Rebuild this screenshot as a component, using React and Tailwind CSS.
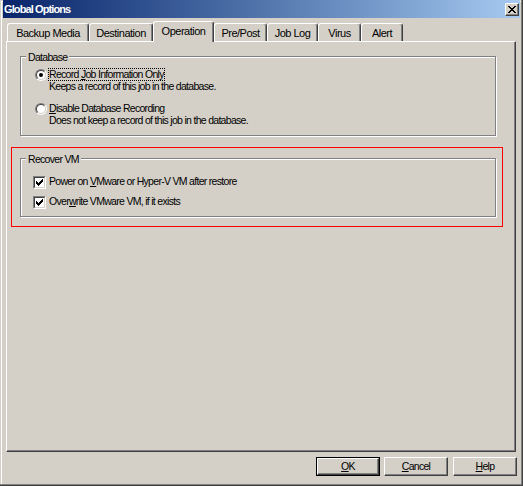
import React from 'react'

const TABS = [
  { label: 'Backup Media', w: 'w-[82px]' },
  { label: 'Destination', w: 'w-[64px]' },
  { label: 'Operation', w: 'w-[61px]', active: true },
  { label: 'Pre/Post', w: 'w-[53px]' },
  { label: 'Job Log', w: 'w-[51px]' },
  { label: 'Virus', w: 'w-[43px]' },
  { label: 'Alert', w: 'w-[42px]' },
]

const raised =
  'border border-t-white border-l-white border-r-[#404040] border-b-[#404040] shadow-[inset_-1px_-1px_0_#808080]'

function Radio({ checked }) {
  return (
    <span className="mt-[1px] flex h-[12px] w-[12px] shrink-0 rounded-full border border-t-[#808080] border-l-[#808080] border-r-white border-b-white">
      <span className="flex h-full w-full items-center justify-center rounded-full border border-t-[#404040] border-l-[#404040] border-r-[#d4d0c8] border-b-[#d4d0c8] bg-white">
        {checked && <span className="h-[4px] w-[4px] rounded-full bg-black" />}
      </span>
    </span>
  )
}

function Checkbox({ checked }) {
  return (
    <span className="mt-[1px] flex h-[13px] w-[13px] shrink-0 border border-t-[#808080] border-l-[#808080] border-r-white border-b-white">
      <span className="flex h-full w-full items-center justify-center border border-t-[#404040] border-l-[#404040] border-r-[#d4d0c8] border-b-[#d4d0c8] bg-white">
        {checked && (
          <svg width="7" height="7" viewBox="0 0 7 7" shapeRendering="crispEdges">
            <path
              fill="#000"
              d="M6 0h1v1h-1z M5 1h2v1h-2z M0 2h1v1h-1z M4 2h3v1h-3z M0 3h2v1h-2z M3 3h3v1h-3z M0 4h5v1h-5z M1 5h3v1h-3z M2 6h1v1h-1z"
            />
          </svg>
        )}
      </span>
    </span>
  )
}

// etched group box, legend sits over the top line
function GroupBox({ title, className, children }) {
  return (
    <div className={`relative border border-[#808080] shadow-[inset_1px_1px_0_#fff,1px_1px_0_#fff] ${className}`}>
      <span className="absolute left-[5px] top-[-6px] bg-[#d4d0c8] px-[2px] leading-[13px]">{title}</span>
      {children}
    </div>
  )
}

function RadioOption({ checked, focused, label, desc }) {
  return (
    <div className="flex items-start">
      <Radio checked={checked} />
      <div className="ml-[1px] flex flex-col items-start">
        <span className={`border leading-[11px] ${focused ? 'border-dotted border-black' : 'border-transparent'}`}>{label}</span>
        <span className="-mt-[1px] pl-[1px] leading-[13px]">{desc}</span>
      </div>
    </div>
  )
}

function CheckOption({ children }) {
  return (
    <div className="flex h-[13px] items-start">
      <Checkbox checked />
      <span className="ml-[3px] leading-[13px]">{children}</span>
    </div>
  )
}

function Button({ children, isDefault, className = '' }) {
  const inner = (
    <div className={`flex h-full w-full items-center justify-center bg-[#d4d0c8] leading-[13px] ${raised}`}>{children}</div>
  )
  if (isDefault)
    return <div className={`h-[19px] w-[64px] border border-black ${className}`}>{inner}</div>
  return <div className={`h-[19px] w-[64px] ${className}`}>{inner}</div>
}

export default function App() {
  return (
    <div className="relative flex h-[486px] w-[523px] flex-col bg-[#d4d0c8] font-['Liberation_Sans',Arial,sans-serif] text-[10.5px] tracking-[-0.7px] text-black shadow-[inset_-1px_-1px_0_#404040,inset_-2px_-2px_0_#808080,inset_1px_1px_0_#d4d0c8,inset_2px_2px_0_#fff]">
      {/* Title bar */}
      <div className="mx-[3px] flex h-[18px] items-center justify-between bg-linear-to-r from-[#0a246a] to-[#a6caf0] pl-[1px] pr-[1px]">
        <span className="text-[11px] font-bold leading-[13px] tracking-[-0.9px] text-white">Global Options</span>
        <div className={`flex h-[13px] w-[14px] items-center justify-center bg-[#d4d0c8] ${raised}`}>
          <svg width="8" height="7" viewBox="0 0 8 7" shapeRendering="crispEdges">
            <path
              fill="#000"
              d="M0 0h2v1h-2z M6 0h2v1h-2z M1 1h2v1h-2z M5 1h2v1h-2z M2 2h4v1h-4z M3 3h2v1h-2z M2 4h4v1h-4z M1 5h2v1h-2z M5 5h2v1h-2z M0 6h2v1h-2z M6 6h2v1h-2z"
            />
          </svg>
        </div>
      </div>

      {/* Tabs */}
      <div className="ml-[7px] mt-[3px] flex h-[20px] items-end text-[11px] tracking-[-0.5px]">
        {TABS.map(t => (
          <div
            key={t.label}
            className={`relative flex shrink-0 justify-center rounded-t-[3px] border-l border-r border-t border-l-white border-t-white border-r-[#404040] bg-[#d4d0c8] pt-[3px] leading-[13px] shadow-[inset_-1px_0_0_#808080] ${t.w} ${
              t.active ? 'z-10 -mb-[1px] h-[21px]' : 'h-[18px]'
            }`}
          >
            {t.label}
          </div>
        ))}
      </div>

      {/* Tab panel */}
      <div className="ml-[6px] flex h-[411px] w-[510px] flex-col border border-b-[#404040] border-l-white border-r-[#404040] border-t-white shadow-[inset_-1px_-1px_0_#808080]">
        <GroupBox title="Database" className="ml-[13px] mt-[14px] h-[80px] w-[476px]">
          <div className="flex flex-col pl-[14px] pt-[11px]">
            <RadioOption
              checked
              focused
              label={<>Record <u>J</u>ob Information Only</>}
              desc="Keeps a record of this job in the database."
            />
            <div className="mt-[9px]">
              <RadioOption
                label={<><u>D</u>isable Database Recording</>}
                desc="Does not keep a record of this job in the database."
              />
            </div>
          </div>
        </GroupBox>

        <div className="ml-[4px] mt-[11px] h-[80px] w-[492px] border border-[#ff0000]">
          <GroupBox title="Recover VM" className="ml-[8px] mt-[10px] h-[59px] w-[476px]">
            <div className="flex flex-col gap-[7px] pl-[12px] pt-[16px]">
              <CheckOption>
                Power on <u>V</u>Mware or Hyper-V VM after restore
              </CheckOption>
              <CheckOption>
                Over<u>w</u>rite VMware VM, if it exists
              </CheckOption>
            </div>
          </GroupBox>
        </div>
      </div>

      {/* Dialog buttons */}
      <div className="mr-[6px] mt-[5px] flex justify-end">
        <Button isDefault>
          <u>O</u>K
        </Button>
        <Button className="ml-[4px]">
          <u>C</u>ancel
        </Button>
        <Button className="ml-[5px]">
          <u>H</u>elp
        </Button>
      </div>
    </div>
  )
}
